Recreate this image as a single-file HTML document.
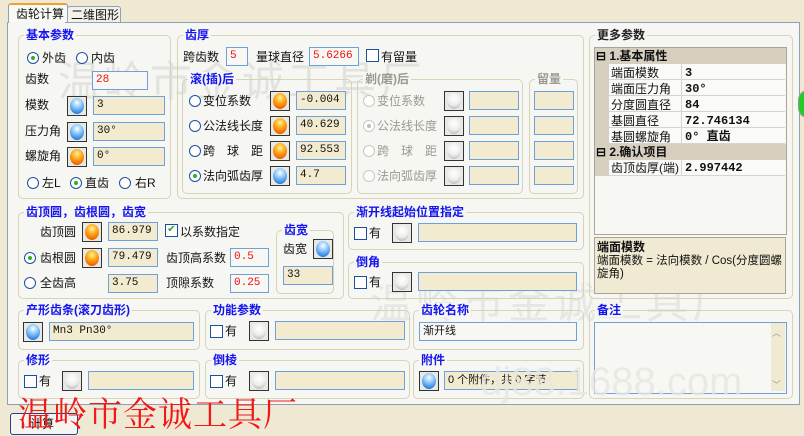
<!DOCTYPE html><html><head><meta charset="utf-8"><style>
body{margin:0;width:804px;height:430px;overflow:hidden;background:#efe9d3;font-family:"Liberation Sans","Noto Sans CJK SC",sans-serif;font-size:12px;color:#111;position:relative}
.a{position:absolute;white-space:nowrap;line-height:14px}
.g{position:absolute;border:1px solid #d8d2b6;border-radius:5px}
.t{position:absolute;top:-8px;left:5px;background:#f6f6f3;color:#1414f0;font-weight:bold;padding:0 2px;line-height:14px;white-space:nowrap}
.i{position:absolute;border:1px solid #6fa0d8;background:#f3ebcf;height:19px;box-sizing:border-box;font-size:11px;padding-left:3px;line-height:17px;font-family:"Liberation Mono","Noto Sans CJK SC",monospace;white-space:nowrap;overflow:hidden}
.w{background:#f7f7f4}
.red{color:#f01010}
.b{position:absolute;width:18px;height:18px;border:1px solid #333;background:#e8e8e4}
.b i{position:absolute;left:2px;top:1px;width:14px;height:16px;border-radius:50%;display:block}
.o i{background:radial-gradient(circle at 50% 30%,#fff3a0 0,#ffb020 35%,#f06000 80%,#b04000 100%)}
.bl i{background:radial-gradient(circle at 50% 30%,#fff 0,#9fd3ff 30%,#2a80e0 80%,#10408a 100%)}
.gr i{background:radial-gradient(circle at 50% 35%,#fff 0,#eee 50%,#bbb 85%,#888 100%)}
.r{position:absolute;width:10px;height:10px;border:1px solid #1d4f9c;border-radius:50%;background:#fff}
.r.on::after{content:"";position:absolute;left:3px;top:3px;width:4px;height:4px;border-radius:50%;background:#2bb02b}
.r.dis{border-color:#c8c8c0}
.r.dis.on::after{background:#bbb}
.c{position:absolute;width:11px;height:11px;border:1px solid #1d4f9c;background:#fff}
.gray{color:#9a9a90}
.st{position:absolute;background:repeating-linear-gradient(#fafaf8 0,#fafaf8 15px,#d8d4c8 15px,#d8d4c8 16px)}
</style></head><body>
<div class="a" style="left:8px;top:3px;width:58px;height:20px;background:#f8f8f5;border:1px solid #8ca0b8;border-top:2px solid #f0a030;border-bottom:none;border-radius:3px 3px 0 0"></div>
<div class="a" style="left:16px;top:7px">齿轮计算</div>
<div class="a" style="left:67px;top:6px;width:52px;height:16px;background:#f2f1ea;border:1px solid #8ca0b8;border-radius:3px 3px 0 0"></div>
<div class="a" style="left:71px;top:8px">二维图形</div>
<div class="a" style="left:7px;top:22px;width:791px;height:381px;border:1px solid #8ca0b8;background:#f6f6f3"></div>
<div class="a" style="left:9px;top:22px;width:56px;height:2px;background:#f6f6f3"></div>

<div class="a" style="left:58px;top:58px;font-size:42px;line-height:48px;color:#e2e2de;letter-spacing:4px">温岭市金诚工具厂</div>
<div class="a" style="left:370px;top:280px;font-size:42px;line-height:48px;color:#e6e6e2;letter-spacing:4px">温岭市金诚工具厂</div>

<div class="g" style="left:18px;top:35px;width:151px;height:162px"><div class="t">基本参数</div></div>
<div class="r on" style="left:27px;top:52px"></div><div class="a" style="left:42px;top:51px">外齿</div>
<div class="r" style="left:76px;top:52px"></div><div class="a" style="left:91px;top:51px">内齿</div>
<div class="a" style="left:25px;top:72px">齿数</div><div class="i w red" style="left:92px;top:71px;width:56px">28</div>
<div class="a" style="left:25px;top:98px">模数</div><div class="b bl" style="left:67px;top:96px"><i></i></div><div class="i" style="left:93px;top:96px;width:72px">3</div>
<div class="a" style="left:25px;top:124px">压力角</div><div class="b bl" style="left:67px;top:122px"><i></i></div><div class="i" style="left:93px;top:122px;width:72px">30°</div>
<div class="a" style="left:25px;top:149px">螺旋角</div><div class="b o" style="left:67px;top:147px"><i></i></div><div class="i" style="left:93px;top:147px;width:72px">0°</div>
<div class="r" style="left:27px;top:177px"></div><div class="a" style="left:42px;top:176px">左L</div>
<div class="r on" style="left:70px;top:177px"></div><div class="a" style="left:85px;top:176px">直齿</div>
<div class="r" style="left:119px;top:177px"></div><div class="a" style="left:135px;top:176px">右R</div>

<div class="g" style="left:177px;top:35px;width:405px;height:162px"><div class="t">齿厚</div></div>
<div class="a" style="left:183px;top:50px">跨齿数</div><div class="i w red" style="left:226px;top:47px;width:22px">5</div>
<div class="a" style="left:256px;top:50px">量球直径</div><div class="i w red" style="left:309px;top:47px;width:50px">5.6266</div>
<div class="c" style="left:366px;top:49px"></div><div class="a" style="left:381px;top:50px">有留量</div>
<div class="g" style="left:182px;top:79px;width:168px;height:113px"><div class="t">滚(插)后</div></div>
<div class="g" style="left:357px;top:79px;width:164px;height:113px"><div class="t gray">剃(磨)后</div></div>
<div class="g" style="left:529px;top:79px;width:47px;height:113px"><div class="t gray">留量</div></div>
<div class="r" style="left:189px;top:95px"></div><div class="a" style="left:203px;top:94px">变位系数</div><div class="b o" style="left:270px;top:91px"><i></i></div><div class="i" style="left:296px;top:91px;width:50px">-0.004</div>
<div class="r" style="left:189px;top:120px"></div><div class="a" style="left:203px;top:119px">公法线长度</div><div class="b o" style="left:270px;top:116px"><i></i></div><div class="i" style="left:296px;top:116px;width:50px">40.629</div>
<div class="r" style="left:189px;top:145px"></div><div class="a" style="left:203px;top:144px">跨　球　距</div><div class="b o" style="left:270px;top:141px"><i></i></div><div class="i" style="left:296px;top:141px;width:50px">92.553</div>
<div class="r on" style="left:189px;top:170px"></div><div class="a" style="left:203px;top:169px">法向弧齿厚</div><div class="b bl" style="left:270px;top:166px"><i></i></div><div class="i" style="left:296px;top:166px;width:50px">4.7</div>
<div class="r dis" style="left:363px;top:95px"></div><div class="a gray" style="left:377px;top:94px">变位系数</div>
<div class="r dis on" style="left:363px;top:120px"></div><div class="a gray" style="left:377px;top:119px">公法线长度</div>
<div class="r dis" style="left:363px;top:145px"></div><div class="a gray" style="left:377px;top:144px">跨　球　距</div>
<div class="r dis" style="left:363px;top:170px"></div><div class="a gray" style="left:377px;top:169px">法向弧齿厚</div>
<div class="b gr" style="left:444px;top:91px"><i></i></div><div class="i" style="left:469px;top:91px;width:50px"></div><div class="i" style="left:534px;top:91px;width:40px"></div>
<div class="b gr" style="left:444px;top:116px"><i></i></div><div class="i" style="left:469px;top:116px;width:50px"></div><div class="i" style="left:534px;top:116px;width:40px"></div>
<div class="b gr" style="left:444px;top:141px"><i></i></div><div class="i" style="left:469px;top:141px;width:50px"></div><div class="i" style="left:534px;top:141px;width:40px"></div>
<div class="b gr" style="left:444px;top:166px"><i></i></div><div class="i" style="left:469px;top:166px;width:50px"></div><div class="i" style="left:534px;top:166px;width:40px"></div>

<div class="g" style="left:589px;top:35px;width:202px;height:262px"><div class="t" style="color:#222">更多参数</div></div>
<div class="a" style="left:594px;top:47px;width:191px;height:186px;border:1px solid #aaa496;background:#f7f7f4"></div>
<div class="st" style="left:609px;top:64px;width:176px;height:80px"></div>
<div class="st" style="left:609px;top:160px;width:176px;height:16px"></div>
<div class="a" style="left:681px;top:64px;width:1px;height:80px;background:#d8d4c8"></div>
<div class="a" style="left:681px;top:160px;width:1px;height:16px;background:#d8d4c8"></div>
<div class="a" style="left:595px;top:48px;width:191px;height:16px;background:#d7d0c0"></div>
<div class="a" style="left:596px;top:49px;font-weight:bold">⊟ 1.基本属性</div>
<div class="a" style="left:595px;top:64px;width:14px;height:80px;background:#d7d0c0"></div>
<div class="a" style="left:595px;top:144px;width:191px;height:16px;background:#d7d0c0"></div>
<div class="a" style="left:596px;top:145px;font-weight:bold">⊟ 2.确认项目</div>
<div class="a" style="left:595px;top:160px;width:14px;height:16px;background:#d7d0c0"></div>
<div class="a" style="left:611px;top:65px;line-height:16px">端面模数<br>端面压力角<br>分度圆直径<br>基圆直径<br>基圆螺旋角</div>
<div class="a" style="left:685px;top:65px;line-height:16px;font-weight:bold;font-family:'Liberation Mono','Noto Sans CJK SC',monospace">3<br>30°<br>84<br>72.746134<br>0° 直齿</div>
<div class="a" style="left:611px;top:161px">齿顶齿厚(端)</div><div class="a" style="left:685px;top:161px;font-weight:bold;font-family:'Liberation Mono',monospace">2.997442</div>
<div class="a" style="left:594px;top:237px;width:190px;height:55px;border:1px solid #aaa496;background:#f1ead2"></div>
<div class="a" style="left:597px;top:240px;font-weight:bold">端面模数</div>
<div class="a" style="left:597px;top:255px;line-height:13px;white-space:normal;width:186px;font-size:11.5px">端面模数 = 法向模数 / Cos(分度圆螺旋角)</div>

<div class="g" style="left:18px;top:212px;width:324px;height:85px"><div class="t">齿顶圆，齿根圆，齿宽</div></div>
<div class="a" style="left:40px;top:225px">齿顶圆</div><div class="b o" style="left:82px;top:222px"><i></i></div><div class="i" style="left:108px;top:222px;width:50px">86.979</div>
<div class="c" style="left:165px;top:224px;color:#2a2;font-size:10px;line-height:10px;text-align:center">✔</div><div class="a" style="left:180px;top:225px">以系数指定</div>
<div class="r on" style="left:24px;top:252px"></div><div class="a" style="left:40px;top:251px">齿根圆</div><div class="b o" style="left:82px;top:248px"><i></i></div><div class="i" style="left:108px;top:248px;width:50px">79.479</div>
<div class="a" style="left:166px;top:251px">齿顶高系数</div><div class="i w red" style="left:230px;top:248px;width:39px">0.5</div>
<div class="r" style="left:24px;top:277px"></div><div class="a" style="left:40px;top:276px">全齿高</div><div class="i" style="left:108px;top:274px;width:50px">3.75</div>
<div class="a" style="left:166px;top:276px">顶隙系数</div><div class="i w red" style="left:230px;top:274px;width:39px">0.25</div>
<div class="g" style="left:276px;top:230px;width:56px;height:62px"><div class="t">齿宽</div></div>
<div class="a" style="left:283px;top:242px">齿宽</div><div class="b bl" style="left:313px;top:239px"><i></i></div><div class="i" style="left:283px;top:266px;width:50px">33</div>

<div class="g" style="left:348px;top:212px;width:234px;height:36px"><div class="t">渐开线起始位置指定</div></div>
<div class="c" style="left:354px;top:227px"></div><div class="a" style="left:369px;top:226px">有</div><div class="b gr" style="left:392px;top:223px"><i></i></div><div class="i" style="left:418px;top:223px;width:159px"></div>
<div class="g" style="left:348px;top:262px;width:234px;height:35px"><div class="t">倒角</div></div>
<div class="c" style="left:354px;top:276px"></div><div class="a" style="left:369px;top:275px">有</div><div class="b gr" style="left:392px;top:272px"><i></i></div><div class="i" style="left:418px;top:272px;width:159px"></div>

<div class="g" style="left:18px;top:310px;width:180px;height:38px"><div class="t">产形齿条(滚刀齿形)</div></div>
<div class="b bl" style="left:23px;top:322px"><i></i></div><div class="i" style="left:49px;top:322px;width:145px">Mn3 Pn30°</div>
<div class="g" style="left:205px;top:310px;width:203px;height:38px"><div class="t">功能参数</div></div>
<div class="c" style="left:210px;top:325px"></div><div class="a" style="left:225px;top:324px">有</div><div class="b gr" style="left:249px;top:321px"><i></i></div><div class="i" style="left:275px;top:321px;width:130px"></div>
<div class="g" style="left:413px;top:310px;width:169px;height:38px"><div class="t">齿轮名称</div></div>
<div class="i w" style="left:419px;top:322px;width:158px;font-family:'Liberation Sans','Noto Sans CJK SC',sans-serif">渐开线</div>
<div class="g" style="left:589px;top:310px;width:202px;height:87px"><div class="t">备注</div></div>
<div class="a" style="left:594px;top:322px;width:191px;height:70px;border:1px solid #6fa0d8;background:#f7f7f4"></div>
<div class="a" style="left:771px;top:323px;width:14px;height:68px;background:#f1ead2"></div>
<div class="a" style="left:772px;top:326px;font-size:9px;color:#999">︿</div><div class="a" style="left:772px;top:378px;font-size:9px;color:#999">﹀</div>

<div class="g" style="left:18px;top:360px;width:180px;height:37px"><div class="t">修形</div></div>
<div class="c" style="left:24px;top:375px"></div><div class="a" style="left:39px;top:374px">有</div><div class="b gr" style="left:62px;top:371px"><i></i></div><div class="i" style="left:88px;top:371px;width:106px"></div>
<div class="g" style="left:205px;top:360px;width:203px;height:37px"><div class="t">倒棱</div></div>
<div class="c" style="left:210px;top:375px"></div><div class="a" style="left:225px;top:374px">有</div><div class="b gr" style="left:249px;top:371px"><i></i></div><div class="i" style="left:275px;top:371px;width:130px"></div>
<div class="g" style="left:413px;top:360px;width:169px;height:37px"><div class="t">附件</div></div>
<div class="b bl" style="left:419px;top:371px"><i></i></div><div class="i" style="left:444px;top:371px;width:134px;font-family:'Liberation Sans','Noto Sans CJK SC',sans-serif">0 个附件，共 0 字节</div>
<div class="a" style="left:480px;top:360px;font-size:40px;line-height:44px;color:rgba(230,230,225,.8)">dj88.1688.com</div>

<div class="a" style="left:10px;top:413px;width:66px;height:20px;border:1px solid #2a3f8f;border-radius:3px;background:#f4f4f0"></div>
<div class="a" style="left:30px;top:417px">计算</div>
<div class="a" style="left:18px;top:392px;font-family:'Noto Serif CJK SC','Liberation Serif',serif;font-size:34px;line-height:40px;color:#f01818;letter-spacing:1px">温岭市金诚工具厂</div>
<div class="a" style="left:798px;top:90px;width:8px;height:26px;border-radius:13px 0 0 13px;background:#2c2;border:1px solid #999"></div>
</body></html>
